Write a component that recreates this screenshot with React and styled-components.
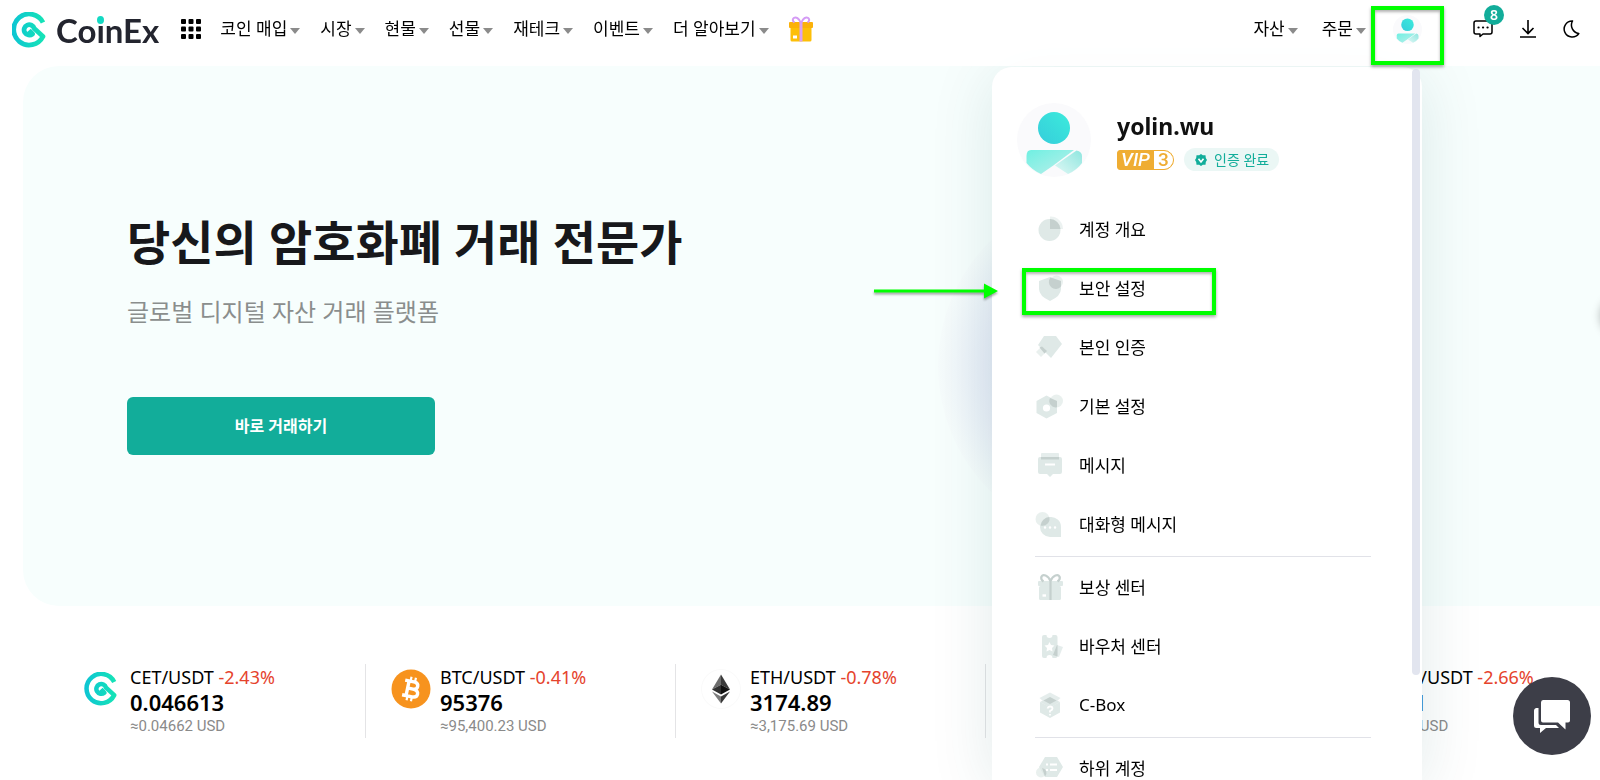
import { useId } from "react";
import styled, { createGlobalStyle, css } from "styled-components";

const GlobalStyle = createGlobalStyle`
  * {
    box-sizing: border-box;
  }

  body {
    margin: 0;
    background: #fff;
    color: #000;
    font-family: "Noto Sans", "Noto Sans CJK KR", sans-serif;
    font-size: 17px;
    overflow: hidden;
  }

  button {
    font: inherit;
    color: inherit;
    padding: 0;
    border: 0;
    background: none;
    cursor: pointer;
  }

  a {
    color: inherit;
    text-decoration: none;
  }

  svg {
    display: block;
    flex: none;
  }
`;

const Page = styled.div`
  min-height: 100vh;
`;

/* header */

const Header = styled.header`
  position: relative;
  z-index: 3;
  display: flex;
  align-items: center;
  height: 66px;
  padding: 0 20px 8px 12px;
  background: rgba(255, 255, 255, 0.85);
`;

const Logo = styled.a`
  display: flex;
  align-items: center;
  gap: 10px;
  padding-top: 2px;
`;

const LogoText = styled.span`
  font-family: Lato, sans-serif;
  font-size: 33px;
  line-height: 36px;
  font-weight: 700;
  color: #23252f;
`;

const LogoI = styled.span`
  position: relative;

  &::after {
    content: "";
    position: absolute;
    top: 6px;
    left: 1px;
    width: 7px;
    height: 8px;
    border-radius: 50%;
    background: #13d9c3;
    box-shadow: 0 0 0 1px #fff;
  }
`;

const AppsButton = styled.button`
  margin: 0 19px 0 22px;
`;

const Nav = styled.nav`
  display: flex;
  align-items: center;
  gap: ${(props) => (props.$wide ? 24 : 20)}px;
`;

const NavButton = styled.button`
  display: flex;
  align-items: center;
  gap: 3px;
  line-height: 24px;
  white-space: nowrap;

  &::after {
    content: "";
    border: 5px solid transparent;
    border-top: 6px solid #8b8b8b;
    border-bottom: 0;
    margin-top: 4px;
  }
`;

const GiftLink = styled.a`
  margin-left: 20px;
`;

const Actions = styled.div`
  display: flex;
  align-items: center;
  margin-left: auto;
`;

const marker = css`
  border: 4px solid #00ff00;
  box-shadow: 0 2px 3px rgba(0, 0, 0, 0.35), inset 0 2px 3px rgba(0, 0, 0, 0.3);
`;

const AccountButton = styled.button`
  position: relative;
  display: flex;
  justify-content: center;
  width: 73px;
  margin: 0 29px 0 5px;

  &::after {
    content: "";
    position: absolute;
    inset: -9px 0 -21px;
    ${marker}
  }
`;

const IconButton = styled.button`
  position: relative;
  margin-left: ${(props) => props.$gap || 0}px;
`;

const Badge = styled.span`
  position: absolute;
  top: -15px;
  right: -11px;
  width: 20px;
  height: 20px;
  border-radius: 50%;
  background: #12ad9a;
  color: #fff;
  font-size: 14px;
  font-weight: 600;
  line-height: 20px;
  text-align: center;
`;

/* hero */

const Hero = styled.section`
  position: relative;
  height: 540px;
  margin-left: 23px;
  padding: 144px 0 0 104px;
  border-radius: 36px 0 0 36px;
  background: #f7fefd;
  overflow: hidden;
`;

const Glow = styled.div`
  position: absolute;
  top: 124px;
  right: 310px;
  width: 352px;
  height: 352px;
  border-radius: 50%;
  background: radial-gradient(closest-side, #c5d0e8 0, #e4eaf6 68%, #f4fafb 96%, #f6fcfc 100%);
`;

const NextButton = styled.button`
  position: absolute;
  top: 230px;
  right: -40px;
  width: 40px;
  height: 40px;
  border-radius: 50%;
  box-shadow: 0 0 8px rgba(0, 0, 0, 0.25);
`;

const Title = styled.h1`
  margin: 0;
  font-size: 47px;
  line-height: 64px;
  font-weight: 700;
  color: #17181b;
`;

const Subtitle = styled.p`
  margin: 20px 0 0;
  font-size: 24px;
  line-height: 36px;
  color: #8a8e8d;
`;

const TradeButton = styled.button`
  width: 308px;
  height: 58px;
  margin-top: 67px;
  padding-bottom: 3px;
  border-radius: 6px;
  background: #12ad9a;
  color: #fff;
  font-size: 16px;
  font-weight: 600;
`;

/* tickers */

const Tickers = styled.section`
  display: flex;
  padding: 58px 0 40px 56px;
  overflow: hidden;
`;

const Ticker = styled.a`
  display: flex;
  flex: 0 0 310px;
  gap: 9px;
  padding-left: 25px;
  border-right: 1px solid #e4e4e6;
  white-space: nowrap;

  svg {
    margin-top: 5px;
  }
`;

const Pair = styled.div`
  font-size: 18px;
  line-height: 26px;
`;

const Change = styled.span`
  color: #e5432d;
`;

const Price = styled.div`
  font-size: 22px;
  line-height: 24px;
  font-weight: 600;
`;

const Fiat = styled.div`
  font-family: Roboto, sans-serif;
  font-size: 15px;
  line-height: 24px;
  color: #8a8a8a;
`;

/* account menu */

const Panel = styled.aside`
  position: fixed;
  z-index: 2;
  top: 67px;
  right: 178px;
  bottom: 0;
  width: 430px;
  padding: 36px 51px 0 43px;
  border-radius: 20px 20px 0 0;
  background: #fff;
  box-shadow: 0 8px 64px rgba(20, 80, 80, 0.12);
`;

const ScrollThumb = styled.div`
  position: absolute;
  top: 2px;
  right: 2px;
  width: 8px;
  height: 85%;
  border-radius: 4px;
  background: #e2e5ef;
`;

const Profile = styled.div`
  display: flex;
  gap: 26px;
  height: 96px;
  margin-left: -18px;
`;

const ProfileInfo = styled.div`
  padding-top: 7px;
`;

const UserName = styled.div`
  font-size: 23px;
  line-height: 32px;
  font-weight: 700;
  color: #111;
`;

const Tags = styled.div`
  display: flex;
  align-items: center;
  gap: 10px;
  margin-top: 6px;
`;

const Vip = styled.span`
  display: flex;
  width: 57px;
  height: 20px;
  border: 1px solid #efad33;
  border-radius: 3px 10px 10px 3px;
  background: #efad33;
  color: #fff;
  font-family: Roboto, sans-serif;
  font-size: 19px;
  line-height: 18px;
  font-style: italic;
  font-weight: 500;
`;

const VipName = styled.span`
  width: 36px;
  padding-left: 3px;
`;

const VipLevel = styled.span`
  flex: 1;
  border-radius: 0 9px 9px 0;
  background: #fff;
  color: #efad33;
  font-style: normal;
  text-align: center;
`;

const Verified = styled.span`
  display: flex;
  align-items: center;
  gap: 7px;
  height: 23px;
  padding: 0 10px 0 11px;
  border-radius: 12px;
  background: #ebf7f5;
  color: #12ad9a;
  font-size: 14px;
  line-height: 20px;
`;

const Menu = styled.ul`
  margin: 0;
  padding: 0;
  list-style: none;

  & + & {
    margin-top: 3px;
    border-top: 1px solid #e1e2e8;
  }
`;

const MenuItem = styled.li`
  position: relative;
`;

const MenuLink = styled.a`
  display: flex;
  align-items: center;
  gap: 14px;
  height: 59px;
`;

const Highlight = styled.span`
  position: absolute;
  top: 10px;
  left: -13px;
  width: 194px;
  height: 47px;
  pointer-events: none;
  ${marker}
`;

const Arrow = styled.svg`
  position: absolute;
  top: 25px;
  left: -161px;
  filter: drop-shadow(0 2px 1px rgba(0, 0, 0, 0.35));
`;

const ChatButton = styled.button`
  position: fixed;
  z-index: 4;
  right: 9px;
  bottom: 25px;
  display: grid;
  place-items: center;
  width: 78px;
  height: 78px;
  border-radius: 50%;
  background: #3d3e48;
`;

const CoinexMark = ({ width, height }) => {
  const id = useId();
  return (
    <svg width={width} height={height} viewBox="0 0 34 36" fill="none">
      <defs>
        <linearGradient id={id} gradientUnits="userSpaceOnUse" x1="0" y1="18" x2="34" y2="18">
          <stop offset="0" stopColor="#0dc5d3" />
          <stop offset="1" stopColor="#16e5b5" />
        </linearGradient>
      </defs>
      <path
        d="M31 10.500A15.500 15.500 0 1 0 31 24.500L22.300 16.500A5.200 5.200 0 1 0 20.500 22L17 18.300"
        stroke={`url(#${id})`}
        strokeWidth="4.800"
        strokeLinejoin="round"
      />
    </svg>
  );
};

const Avatar = ({ size }) => {
  const id = useId();
  return (
    <svg width={size} height={size} viewBox="0 0 74 74">
      <defs>
        <linearGradient id={`${id}h`} x1="0" y1="1" x2="1" y2="0">
          <stop offset="0" stopColor="#36cddb" />
          <stop offset="1" stopColor="#3cebdc" />
        </linearGradient>
        <linearGradient id={`${id}b`} x1="0" y1="0" x2="1" y2="1">
          <stop offset="0" stopColor="#6ff0e2" />
          <stop offset="1" stopColor="#bdeeea" />
        </linearGradient>
        <linearGradient id={`${id}c`} x1="0" y1="1" x2="1" y2="0">
          <stop offset="0" stopColor="#e0f8f5" />
          <stop offset="1" stopColor="#8fe6df" />
        </linearGradient>
      </defs>
      <circle cx="37" cy="37" r="37" fill="#fafafc" />
      <circle cx="37" cy="25" r="16" fill={`url(#${id}h)`} />
      <path
        d="M14 47H57L37 62L24 71Q15 67 9.500 60V53Q9.500 47 14 47Z"
        fill={`url(#${id}b)`}
      />
      <path
        d="M59.500 47.500Q65 48.500 65 53V60Q60 67 51 71L38 62.500Z"
        fill={`url(#${id}c)`}
      />
    </svg>
  );
};

const AppsIcon = () => (
  <svg width="20" height="20" viewBox="0 0 20 20">
    {[0, 7.5, 15].map((y) =>
      [0, 7.5, 15].map((x) => (
        <rect key={`${x}-${y}`} x={x} y={y} width="5" height="5" rx="1" />
      ))
    )}
  </svg>
);

const GiftIcon = () => (
  <svg width="24" height="26" viewBox="0 0 24 26">
    <rect x="1.500" y="9" width="21" height="16.500" rx="1.500" fill="#fdbf08" />
    <rect x="0" y="6" width="24" height="6" rx="1" fill="#fbb10a" />
    <rect x="10.500" y="6" width="3" height="19.500" fill="#d9a1f2" />
    <path
      d="M12 7C10 2 7 .5 4.800 2C3 3.500 4 5.500 5.500 6.500M12 7C14 2 17 .5 19.200 2C21 3.500 20 5.500 18.500 6.500"
      fill="none"
      stroke="#d49bf5"
      strokeWidth="2"
    />
    <rect x="4" y="19.500" width="4" height="3" fill="#fff" />
  </svg>
);

const MessageIcon = () => (
  <svg width="20" height="18" viewBox="0 0 20 18" fill="none" stroke="#000" strokeWidth="1.500">
    <path d="M3 1H17Q19 1 19 3V12Q19 14 17 14H10L7 16.500V14H3Q1 14 1 12V3Q1 1 3 1Z" strokeLinejoin="round" />
    <path d="M5.500 7.500h.1M10 7.500h.1M14.500 7.500h.1" strokeWidth="2.200" strokeLinecap="round" />
  </svg>
);

const DownloadIcon = () => (
  <svg width="16" height="18" viewBox="0 0 16 18" fill="none" stroke="#000" strokeWidth="1.600">
    <path d="M8 0V13M2.500 8L8 13.500L13.500 8M0 17H16" />
  </svg>
);

const MoonIcon = () => (
  <svg width="17" height="18" viewBox="0 0 17 18" fill="none" stroke="#000" strokeWidth="1.500">
    <path d="M9.500 1A8 8 0 1 0 15.800 13.500A8.500 8.500 0 0 1 9.500 1Z" strokeLinejoin="round" />
  </svg>
);

const VerifiedIcon = () => (
  <svg width="12" height="12" viewBox="0 0 12 12">
    <path d="M6 0L7.800 1.200H10.500L10.800 4L12 6L10.800 8L10.500 10.800H7.800L6 12L4.200 10.800H1.500L1.200 8L0 6L1.200 4L1.500 1.200H4.200Z" fill="#12ad9a" />
    <path d="M3.500 4.800L6 8L8.500 4.800" fill="none" stroke="#fff" strokeWidth="1.600" />
  </svg>
);

const ChatIcon = () => (
  <svg width="38" height="34" viewBox="0 0 38 34" fill="#fff">
    <path d="M10 1H34.500Q37 1 37 3.500V21.500Q37 23.500 35 23.500H32.500V30.500L25 23.500H10Q8 23.500 8 21.500V3.500Q8 1 10 1Z" />
    <path d="M5.500 9V23.500Q5.500 26 8 26H23L26 29H13L7 34V29H3.500Q1 29 1 26.500V11.500Q1 9.500 3 9Z" />
  </svg>
);

// two-tone menu icons: base shape plus a lighter shape, the overlap is darker
const menuIcons = {
  overview: (
    <>
      <circle cx="14.500" cy="16" r="11" />
      <path d="M15 2.500A12.500 12.500 0 0 1 28 15H15Z" opacity=".6" />
      <path d="M15 5A11 11 0 0 1 25.500 15H15Z" fill="#c5d0ce" />
    </>
  ),
  security: (
    <>
      <path d="M15 4L26 8V16Q26 23 15 28Q4 23 4 16V8Z" />
      <circle cx="21.500" cy="9" r="6.500" opacity=".7" />
      <path d="M15.500 4.500L26 8V13.500A6.500 6.500 0 0 1 15.500 4.500Z" fill="#c5d0ce" />
    </>
  ),
  identity: (
    <>
      <path d="M9 4H21L27 12L16 26L3 13Z" />
      <path d="M7 14L12 19L6 25L1 20Z" opacity=".7" />
      <path d="M7 14.500L12 19L9.500 21.500L4.500 15.500Z" fill="#c5d0ce" />
    </>
  ),
  settings: (
    <>
      <path d="M11.500 4.500L22 10V22L11.500 27.500L1.500 22V10Z" />
      <circle cx="21.500" cy="10" r="6.500" opacity=".7" />
      <path d="M15 7L22 10V16.300A6.500 6.500 0 0 1 15 7Z" fill="#c5d0ce" />
      <circle cx="11.500" cy="17" r="3.600" fill="#fff" />
    </>
  ),
  message: (
    <>
      <rect x="6" y="3" width="18" height="7" rx="1" opacity=".8" />
      <path d="M5 7H25Q27 7 27 9V22Q27 24 25 24H18L15 27L12 24H5Q3 24 3 22V9Q3 7 5 7Z" />
      <path d="M6 7H24V9.500H6Z" fill="#c5d0ce" />
      <path d="M10 14.500H20" stroke="#fff" strokeWidth="2" />
    </>
  ),
  chat: (
    <>
      <path d="M15 8A10 10 0 0 1 26 18V28H15A10 10 0 1 1 15 8Z" />
      <circle cx="7.500" cy="10" r="7" opacity=".7" />
      <path d="M5.500 16.500A10 10 0 0 1 14.300 8A7 7 0 0 1 5.500 16.500Z" fill="#c5d0ce" />
      <path d="M10 18.500h.1M15 18.500h.1M20 18.500h.1" stroke="#fff" strokeWidth="2.400" strokeLinecap="round" />
    </>
  ),
  reward: (
    <>
      <rect x="4" y="14" width="22" height="14" rx="1.500" />
      <rect x="3" y="9" width="25" height="5" rx="1" />
      <path d="M15.500 28V9C13 3 8 2 6.500 4.500C5.500 7 7 8.500 8.500 9.500M15.500 9C18 3 23 2 24.500 4.500C25.500 7 24 8.500 22.500 9.500" fill="none" stroke="#c5d0ce" strokeWidth="2.200" />
      <path d="M7.500 23.500H11" stroke="#fff" strokeWidth="2.400" />
    </>
  ),
  voucher: (
    <>
      <path d="M9 4H11.500A3 3 0 0 0 17.500 4H20.500Q22.500 4 22.500 6V25Q22.500 27 20.500 27H17.500A3 3 0 0 0 11.500 27H9Q7 27 7 25V6Q7 4 9 4Z" />
      <path d="M22 14L28 16L24 26L18 24Z" opacity=".8" />
      <path d="M22 14L22.500 14.200V25.500L18 24Z" fill="#c5d0ce" />
      <path d="M14.500 11L16 14L19.500 14.500L17 17L17.500 20.500L14.500 19L11.500 20.500L12 17L9.500 14.500L13 14Z" fill="#fff" />
    </>
  ),
  box: (
    <>
      <path d="M5 12L15 17L25 12V22.500L15 28L5 22.500Z" />
      <path d="M5 12L15 7L25 12L15 17.500Z" />
      <path d="M15 2.500L25.500 8L22 11L15 14.500L8 11L4.500 8Z" opacity=".8" />
      <path d="M8.500 10.500L15 7L21.500 10.500L15 14Z" fill="#c5d0ce" />
      <path d="M12.500 18.500Q13 16.500 15 16.500Q17.500 16.500 17.500 18.500Q17.500 20 15 21V22.500M15 24V25.500" fill="none" stroke="#fff" strokeWidth="1.800" />
    </>
  ),
  subAccount: (
    <>
      <path d="M10 4H22L28 14L22 24H10L4 14Z" />
      <circle cx="6" cy="19.500" r="5" opacity=".7" />
      <path d="M7 15A5 5 0 0 1 10 23.500Z" fill="#c5d0ce" />
      <path d="M11 11.500h2M15 11.500H22M11 17h2M15 17H22" stroke="#fff" strokeWidth="2.200" />
    </>
  ),
};

const MenuIcon = ({ name }) => (
  <svg width="30" height="30" viewBox="0 0 30 30" fill="#dfe9e7">
    {menuIcons[name]}
  </svg>
);

const BtcIcon = () => (
  <svg width="40" height="40" viewBox="0 0 40 40" fill="none">
    <circle cx="20" cy="20" r="19.500" fill="#f7931e" />
    <g transform="rotate(12 20 20)" stroke="#fff" strokeWidth="3.400">
      <path d="M12.500 12.500H22.500Q26 13 26 16Q26 19.500 22 19.700H16M22 19.700Q27.500 20 27.500 23.700Q27.500 27.500 22.500 27.500H12.500M16.500 12V28" />
      <path d="M18 8V12M22.500 8V12M18 28V32M22.500 28V32" strokeWidth="2.200" />
    </g>
  </svg>
);

const EthIcon = () => (
  <svg width="40" height="40" viewBox="0 0 40 40">
    <circle cx="20" cy="20" r="19.500" fill="#fff" stroke="#fafafa" />
    <path d="M20 5.500L11 20.500L20 15.800Z" fill="#6c6c6c" />
    <path d="M20 5.500L29 20.500L20 15.800Z" fill="#3a3a3a" />
    <path d="M11 20.500L20 15.800V25.500Z" fill="#303030" />
    <path d="M29 20.500L20 15.800V25.500Z" fill="#101010" />
    <path d="M11 22.500L20 27.500V34.500Z" fill="#7c7c7c" />
    <path d="M29 22.500L20 27.500V34.500Z" fill="#383838" />
  </svg>
);

const CetIcon = () => (
  <svg width="40" height="40" viewBox="0 0 40 40">
    <g transform="translate(3 3)">
      <CoinexMark width="34" height="34" />
    </g>
  </svg>
);

const PlainCoin = () => (
  <svg width="40" height="40" viewBox="0 0 40 40">
    <circle cx="20" cy="20" r="19.500" fill="#c2a633" />
  </svg>
);

const leftNav = ["코인 매입", "시장", "현물", "선물", "재테크", "이벤트", "더 알아보기"];

const rightNav = ["자산", "주문"];

const tickers = [
  { coin: "CET", change: "-2.43%", price: "0.046613", fiat: "0.04662", icon: <CetIcon /> },
  { coin: "BTC", change: "-0.41%", price: "95376", fiat: "95,400.23", icon: <BtcIcon /> },
  { coin: "ETH", change: "-0.78%", price: "3174.89", fiat: "3,175.69", icon: <EthIcon /> },
  { coin: "XRP", change: "-1.12%", price: "2.472", fiat: "2.47", icon: <PlainCoin /> },
  { coin: "DOGE", change: "-2.66%", price: "0.331", fiat: "0.331", icon: <PlainCoin /> },
];

const menuGroups = [
  [
    { label: "계정 개요", icon: "overview" },
    { label: "보안 설정", icon: "security", highlighted: true },
    { label: "본인 인증", icon: "identity" },
    { label: "기본 설정", icon: "settings" },
    { label: "메시지", icon: "message" },
    { label: "대화형 메시지", icon: "chat" },
  ],
  [
    { label: "보상 센터", icon: "reward" },
    { label: "바우처 센터", icon: "voucher" },
    { label: "C-Box", icon: "box" },
  ],
  [{ label: "하위 계정", icon: "subAccount" }],
];

const AccountPanel = () => (
  <Panel>
    <Profile>
      <Avatar size={74} />
      <ProfileInfo>
        <UserName>yolin.wu</UserName>
        <Tags>
          <Vip>
            <VipName>VIP</VipName>
            <VipLevel>3</VipLevel>
          </Vip>
          <Verified>
            <VerifiedIcon />
            인증 완료
          </Verified>
        </Tags>
      </ProfileInfo>
    </Profile>
    {menuGroups.map((group, index) => (
      <Menu key={index}>
        {group.map((item) => (
          <MenuItem key={item.label}>
            <MenuLink href="#">
              <MenuIcon name={item.icon} />
              {item.label}
            </MenuLink>
            {item.highlighted && (
              <>
                <Highlight />
                <Arrow width="124" height="16" viewBox="0 0 124 16" fill="#00ff00">
                  <path d="M0 6.500H110V.5L124 8L110 15.500V9.500H0Z" />
                </Arrow>
              </>
            )}
          </MenuItem>
        ))}
      </Menu>
    ))}
    <ScrollThumb />
  </Panel>
);

const App = () => {
  return (
    <Page>
      <GlobalStyle />
      <Header>
        <Logo href="#">
          <CoinexMark width="34" height="36" />
          <LogoText>
            Co<LogoI>i</LogoI>nEx
          </LogoText>
        </Logo>
        <AppsButton aria-label="apps">
          <AppsIcon />
        </AppsButton>
        <Nav>
          {leftNav.map((label) => (
            <NavButton key={label}>{label}</NavButton>
          ))}
        </Nav>
        <GiftLink href="#" aria-label="gift">
          <GiftIcon />
        </GiftLink>
        <Actions>
          <Nav $wide>
            {rightNav.map((label) => (
              <NavButton key={label}>{label}</NavButton>
            ))}
          </Nav>
          <AccountButton aria-label="account">
            <Avatar size={29} />
          </AccountButton>
          <IconButton aria-label="messages">
            <MessageIcon />
            <Badge>8</Badge>
          </IconButton>
          <IconButton $gap={27} aria-label="download">
            <DownloadIcon />
          </IconButton>
          <IconButton $gap={27} aria-label="dark mode">
            <MoonIcon />
          </IconButton>
        </Actions>
      </Header>
      <Hero>
        <Glow />
        <Title>당신의 암호화폐 거래 전문가</Title>
        <Subtitle>글로벌 디지털 자산 거래 플랫폼</Subtitle>
        <TradeButton>바로 거래하기</TradeButton>
        <NextButton aria-label="next" />
      </Hero>
      <Tickers>
        {tickers.map((item) => (
          <Ticker href="#" key={item.coin}>
            {item.icon}
            <div>
              <Pair>
                {item.coin}/USDT <Change>{item.change}</Change>
              </Pair>
              <Price>{item.price}</Price>
              <Fiat>≈{item.fiat} USD</Fiat>
            </div>
          </Ticker>
        ))}
      </Tickers>
      <AccountPanel />
      <ChatButton aria-label="chat">
        <ChatIcon />
      </ChatButton>
    </Page>
  );
};

export default App;
